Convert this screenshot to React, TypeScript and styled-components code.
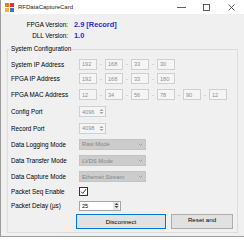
import React from "react";
import styled, { createGlobalStyle } from "styled-components";

const Global = createGlobalStyle`
  html, body { margin: 0; padding: 0; background: #ffffff; }
  body { font-family: "Liberation Sans", Arial, sans-serif; font-size: 6.3px; color: #000; }
  * { box-sizing: border-box; }
`;

const Window = styled.div`
  width: 244px;
  height: 237px;
  background: #f0f0f0;
  border-left: 1px solid #9c9c9c;
  border-bottom: 1px solid #9c9c9c;
  display: flex;
  flex-direction: column;
  overflow: hidden;
`;

const TitleBar = styled.div`
  height: 14px;
  background: #ffffff;
  display: flex;
  align-items: center;
  padding-left: 4px;
`;

const Title = styled.span`
  margin-left: 4px;
  font-size: 6px;
  color: #1a1a1a;
  flex: 1;
`;

const CaptionButton = styled.div`
  width: 25px;
  height: 14px;
  display: flex;
  align-items: center;
  justify-content: center;
`;

const Body = styled.div`
  flex: 1;
  padding: 5px 0 0 6px;
`;

const VersionGrid = styled.div`
  display: grid;
  grid-template-columns: 61px auto;
  grid-auto-rows: 11px;
  column-gap: 6px;
  align-items: center;
`;

const VersionLabel = styled.span`
  text-align: right;
  font-size: 6.3px;
`;

const VersionValue = styled.span`
  color: #1f2bd6;
  font-weight: bold;
  font-size: 7.4px;
`;

const GroupBox = styled.fieldset`
  margin: 4px 0 0 0;
  width: 231px;
  height: 188px;
  border: 1px solid #dcdcdc;
  border-radius: 0;
  padding: 4px 2px 2px 2px;
  min-width: 0;
`;

const Legend = styled.legend`
  padding: 0 1px;
  font-size: 6.3px;
  line-height: 8px;
`;

const Row = styled.div<{ $h: number }>`
  height: ${(p) => p.$h}px;
  display: flex;
  align-items: center;
`;

const Label = styled.span`
  width: 69px;
  flex-shrink: 0;
  padding-left: 1px;
  white-space: nowrap;
`;

const Box = styled.div<{ $w: number }>`
  width: ${(p) => p.$w}px;
  height: 11px;
  border: 1px solid #cfcfcf;
  background: #f5f5f5;
  color: #8f8f8f;
  font-size: 5.6px;
  display: flex;
  align-items: center;
  padding-left: 2px;
`;

const Sep = styled.span`
  width: 8px;
  text-align: center;
  color: #9a9a9a;
  font-size: 5.6px;
`;

const SpinBox = styled(Box)<{ $enabled?: boolean }>`
  position: relative;
  padding-right: 8px;
  ${(p) =>
    p.$enabled &&
    `background: #ffffff; border-color: #a5a5a5; color: #000000; height: 10px;`}
`;

const SpinArrows = styled.div<{ $enabled?: boolean }>`
  position: absolute;
  right: 1px;
  top: 0;
  bottom: 0;
  width: 6px;
  display: flex;
  align-items: center;
  justify-content: center;
  background: ${(p) => (p.$enabled ? "#e6e6e6" : "transparent")};
`;

const Combo = styled.div`
  width: 67px;
  height: 11px;
  border: 1px solid #c4c4c4;
  background: #cccccc;
  color: #858585;
  font-size: 5.8px;
  display: flex;
  align-items: center;
  padding-left: 2px;
  overflow: hidden;
`;

const ComboText = styled.span`
  width: 54px;
  text-align: left;
  white-space: nowrap;
  overflow: hidden;
`;

const ComboArrow = styled.span`
  margin-left: auto;
  width: 9px;
  display: flex;
  justify-content: center;
`;

const Check = styled.div`
  width: 9px;
  height: 9px;
  border: 1px solid #333333;
  background: #ffffff;
  display: flex;
  align-items: center;
  justify-content: center;
`;

const ButtonRow = styled.div`
  height: 16px;
  display: flex;
  align-items: center;
  justify-content: flex-end;
  gap: 5px;
  padding-right: 2px;
`;

const Button = styled.div<{ $w: number; $focused?: boolean; $top?: boolean }>`
  width: ${(p) => p.$w}px;
  height: 15px;
  background: #e1e1e1;
  border: 1px solid ${(p) => (p.$focused ? "#0078d7" : "#adadad")};
  display: flex;
  justify-content: center;
  align-items: ${(p) => (p.$top ? "flex-start" : "center")};
  padding-top: ${(p) => (p.$top ? "1px" : "0")};
  font-size: 6.2px;
  line-height: 7px;
  overflow: hidden;
`;

function AppIcon() {
  return (
    <svg width="9" height="9" viewBox="0 0 9 9">
      <rect x="0" y="0" width="4" height="4" fill="#e8782a" />
      <rect x="5" y="0" width="4" height="4" fill="#d9372b" />
      <rect x="0" y="5" width="4" height="4" fill="#f2b53c" />
      <rect x="5" y="5" width="4" height="4" fill="#3d6fd1" />
    </svg>
  );
}

function Arrows({ color }: { color: string }) {
  return (
    <svg width="5" height="7" viewBox="0 0 5 7">
      <path d="M0.5 3 L2.5 1 L4.5 3 Z" fill={color} />
      <path d="M0.5 4 L2.5 6 L4.5 4 Z" fill={color} />
    </svg>
  );
}

function IpBoxes({ values }: { values: string[] }) {
  return (
    <>
      {values.map((v, i) => (
        <React.Fragment key={i}>
          {i > 0 && <Sep>-</Sep>}
          <Box $w={18}>{v}</Box>
        </React.Fragment>
      ))}
    </>
  );
}

function Dropdown({ text }: { text: string }) {
  return (
    <Combo>
      <ComboText>{text}</ComboText>
      <ComboArrow>
        <svg width="5" height="3" viewBox="0 0 5 3">
          <path d="M0.5 0.5 L2.5 2.5 L4.5 0.5" stroke="#9a9a9a" strokeWidth="0.8" fill="none" />
        </svg>
      </ComboArrow>
    </Combo>
  );
}

export default function App() {
  return (
    <>
      <Global />
      <Window>
        <TitleBar>
          <AppIcon />
          <Title>RFDataCaptureCard</Title>
          <CaptionButton>
            <svg width="9" height="9" viewBox="0 0 9 9">
              <path d="M0 4.5 H9" stroke="#333" strokeWidth="0.8" />
            </svg>
          </CaptionButton>
          <CaptionButton>
            <svg width="7" height="7" viewBox="0 0 7 7">
              <rect x="0.5" y="0.5" width="6" height="6" stroke="#333" strokeWidth="0.8" fill="none" />
            </svg>
          </CaptionButton>
          <CaptionButton>
            <svg width="7" height="7" viewBox="0 0 7 7">
              <path d="M0.5 0.5 L6.5 6.5 M6.5 0.5 L0.5 6.5" stroke="#333" strokeWidth="0.8" />
            </svg>
          </CaptionButton>
        </TitleBar>
        <Body>
          <VersionGrid>
            <VersionLabel>FPGA Version:</VersionLabel>
            <VersionValue>2.9 [Record]</VersionValue>
            <VersionLabel>DLL Version:</VersionLabel>
            <VersionValue>1.0</VersionValue>
          </VersionGrid>
          <GroupBox>
            <Legend>System Configuration</Legend>
            <Row $h={14}>
              <Label>System IP Address</Label>
              <IpBoxes values={["192", "168", "33", "30"]} />
            </Row>
            <Row $h={15}>
              <Label>FPGA IP Address</Label>
              <IpBoxes values={["192", "168", "33", "180"]} />
            </Row>
            <Row $h={17}>
              <Label>FPGA MAC Address</Label>
              <IpBoxes values={["12", "34", "56", "78", "90", "12"]} />
            </Row>
            <Row $h={17}>
              <Label>Config Port</Label>
              <SpinBox $w={27}>
                4096
                <SpinArrows>
                  <Arrows color="#a0a0a0" />
                </SpinArrows>
              </SpinBox>
            </Row>
            <Row $h={16}>
              <Label>Record Port</Label>
              <SpinBox $w={27}>
                4098
                <SpinArrows>
                  <Arrows color="#a0a0a0" />
                </SpinArrows>
              </SpinBox>
            </Row>
            <Row $h={16}>
              <Label>Data Logging Mode</Label>
              <Dropdown text="Raw Mode" />
            </Row>
            <Row $h={17}>
              <Label>Data Transfer Mode</Label>
              <Dropdown text="LVDS Mode" />
            </Row>
            <Row $h={15}>
              <Label>Data Capture Mode</Label>
              <Dropdown text="Ethernet Stream" />
            </Row>
            <Row $h={14}>
              <Label>Packet Seq Enable</Label>
              <Check>
                <svg width="7" height="7" viewBox="0 0 7 7">
                  <path d="M1 3.6 L2.8 5.4 L6 1.2" stroke="#222" strokeWidth="0.9" fill="none" />
                </svg>
              </Check>
            </Row>
            <Row $h={15}>
              <Label>Packet Delay (µs)</Label>
              <SpinBox $w={42} $enabled>
                25
                <SpinArrows $enabled>
                  <Arrows color="#444" />
                </SpinArrows>
              </SpinBox>
            </Row>
            <ButtonRow>
              <Button $w={90} $focused>
                Disconnect
              </Button>
              <Button $w={62} $top>
                Reset and
              </Button>
            </ButtonRow>
          </GroupBox>
        </Body>
      </Window>
    </>
  );
}
